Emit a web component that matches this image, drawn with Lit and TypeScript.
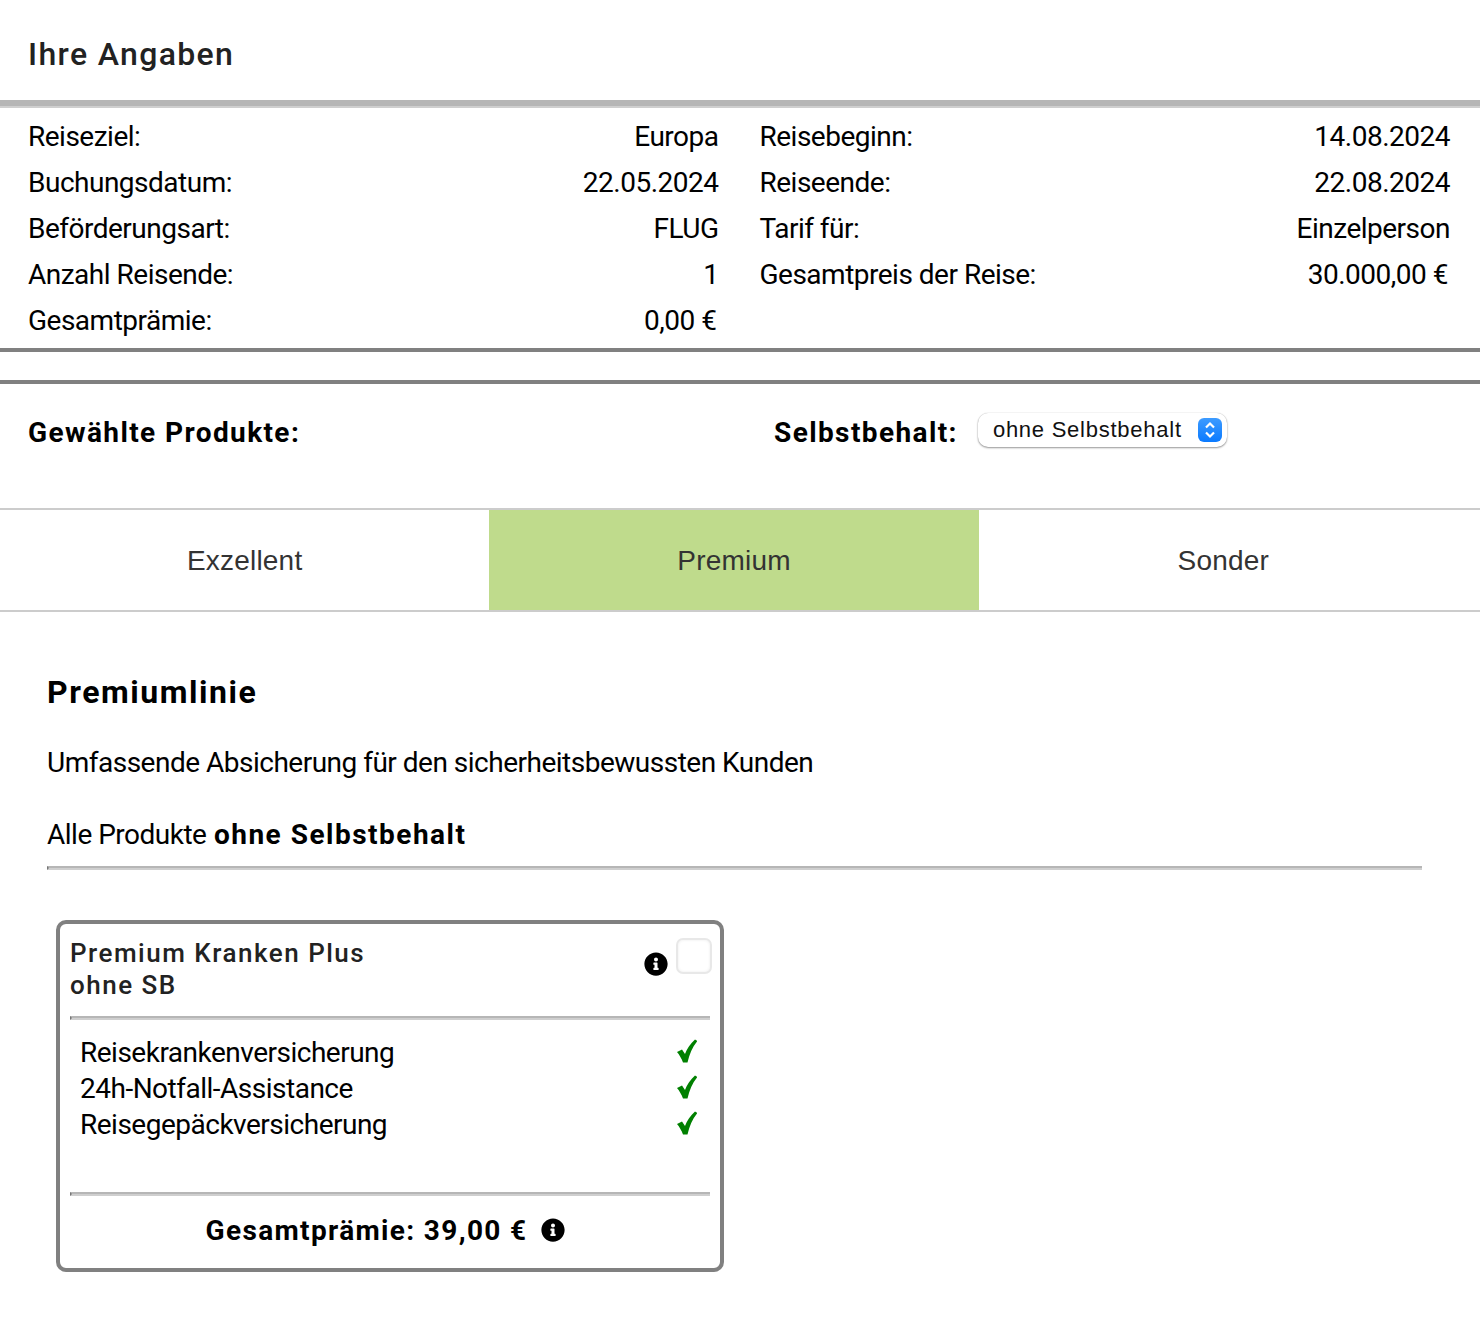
import { LitElement, html, css } from "lit";
import { customElement } from "lit/decorators.js";

const infoIcon = html`<svg class="info" viewBox="0 0 512 512"><path d="M256 8C119.043 8 8 119.083 8 256c0 136.997 111.043 248 248 248s248-111.003 248-248C504 119.083 392.957 8 256 8zm0 110c23.196 0 42 18.804 42 42s-18.804 42-42 42-42-18.804-42-42 18.804-42 42-42zm56 254c0 6.627-5.373 12-12 12h-88c-6.627 0-12-5.373-12-12v-24c0-6.627 5.373-12 12-12h12v-64h-12c-6.627 0-12-5.373-12-12v-24c0-6.627 5.373-12 12-12h64c6.627 0 12 5.373 12 12v100h12c6.627 0 12 5.373 12 12v24z"/></svg>`;
const check = html`<svg class="check" viewBox="0 0 20 24"><path fill="#008000" d="M0 13 L5 10.5 L8 15 C10 9.5 13.5 4.5 18 0.5 L20.5 2 C15.5 8 12.5 15 10.5 23.5 L6 23.5 C4.5 19.5 2.5 16 0 13 Z"/></svg>`;

const left = [["Reiseziel:", "Europa"], ["Buchungsdatum:", "22.05.2024"], ["Beförderungsart:", "FLUG"], ["Anzahl Reisende:", "1"], ["Gesamtprämie:", "0,00 €"]];
const right = [["Reisebeginn:", "14.08.2024"], ["Reiseende:", "22.08.2024"], ["Tarif für:", "Einzelperson"], ["Gesamtpreis der Reise:", "30.000,00 €"]];
const features = ["Reisekrankenversicherung", "24h-Notfall-Assistance", "Reisegepäckversicherung"];

@customElement("app-root")
export class AppRoot extends LitElement {
  static styles = css`
    :host { display: block; height: 1322px; background: #fff; color: #000; font-family: Roboto, sans-serif; font-size: 28px; letter-spacing: -0.5px; overflow: hidden; }
    .title { margin: 0; padding: 32px 28px 0; height: 68px; box-sizing: border-box; font-size: 32px; line-height: 44px; font-weight: 500; letter-spacing: 1.35px; color: #222; }
    .hr { box-sizing: border-box; height: 4px; border-top: 2px solid #b6b6b6; border-bottom: 2px solid #cfcfcf; border-left: 2px solid #777; }
    .rule-top { height: 8px; border-top-width: 6px; border-left: 0; margin-top: 32px; }
    .data { display: flex; padding: 6px 30px 0 28px; gap: 41px; height: 240px; box-sizing: border-box; }
    .col { flex: 1; }
    .row { display: flex; justify-content: space-between; height: 46px; line-height: 46px; white-space: nowrap; }
    .euro { padding-right: 2px; }
    .thick { height: 4px; background: #808080; }
    .gap { height: 28px; }
    .choose { height: 124px; display: flex; box-sizing: border-box; padding: 29px 0 0 28px; font-weight: 700; letter-spacing: 1.4px; line-height: 40px; }
    .choose-l { width: 746px; }
    .sel-wrap { display: flex; align-items: flex-start; gap: 20px; }
    .select { width: 249px; height: 34px; box-sizing: border-box; border-radius: 10px; background: #fff; box-shadow: 0 1px 2px rgba(0,0,0,.4), 0 0 1px rgba(0,0,0,.25); display: flex; align-items: center; justify-content: space-between; padding: 0 5px 0 15px; font: 400 22px/34px "Liberation Sans", sans-serif; letter-spacing: .75px; color: #111; }
    .updown { width: 24px; height: 24px; border-radius: 6px; background: linear-gradient(#3d9bff, #0a7aff); display: block; }
    .tabs { display: grid; grid-template-columns: repeat(3, 489.33px); height: 104px; box-sizing: border-box; border-top: 2px solid #ccc; border-bottom: 2px solid #ccc; font: 400 28px/100px "Liberation Sans", sans-serif; letter-spacing: .2px; color: #333; text-align: center; }
    .tab { height: 100px; }
    .tab span { position: relative; top: 1px; }
    .tab.active { background: #bfdb8c; }
    .panel { padding: 0 58px 0 47px; }
    h2 { margin: 0; padding-top: 57px; font-size: 32px; line-height: 46px; font-weight: 700; letter-spacing: 1.55px; }
    .desc { margin-top: 25px; line-height: 46px; }
    .alle { margin-top: 26px; line-height: 46px; }
    .alle b { letter-spacing: 1.5px; margin-left: 1px; }
    .panel > .hr { margin-top: 8px; }
    .card { margin: 50px 0 0 9px; width: 668px; height: 352px; box-sizing: border-box; border: 4px solid #808080; border-radius: 10px; padding: 10px 10px 0 10px; }
    .head { display: flex; height: 82px; }
    .name { flex: 1; font-size: 26px; line-height: 32px; font-weight: 500; letter-spacing: 1.5px; color: #222; padding-top: 3px; }
    .info { width: 24px; height: 24px; display: block; flex: none; }
    .head .info { margin: 18px 8px 0 0; }
    .box { width: 36px; height: 36px; box-sizing: border-box; border: 2px solid #e8e8e8; border-radius: 7px; box-shadow: inset 0 0 3px rgba(0,0,0,.08); margin: 4px -2px 0 0; }
    .features { padding: 15px 12px 0 10px; height: 172px; box-sizing: border-box; }
    .feat { display: flex; justify-content: space-between; align-items: center; height: 36px; line-height: 36px; }
    .check { width: 20px; height: 24px; display: block; margin: 0 1px 4px 0; }
    .total { display: flex; justify-content: center; align-items: center; gap: 13px; height: 68px; padding-right: 10px; font-weight: 700; letter-spacing: 1.35px; }
  `;

  render() {
    const rows = (r: string[][]) => r.map(([a, b]) => html`<div class="row"><span>${a}</span><span class=${b.endsWith("€") ? "euro" : ""}>${b}</span></div>`);
    return html`
      <h1 class="title">Ihre Angaben</h1>
      <div class="hr rule-top"></div>
      <div class="data"><div class="col">${rows(left)}</div><div class="col">${rows(right)}</div></div>
      <div class="thick"></div>
      <div class="gap"></div>
      <div class="thick"></div>
      <div class="choose">
        <div class="choose-l">Gewählte Produkte:</div>
        <div class="sel-wrap"><span>Selbstbehalt:</span>
          <div class="select"><span>ohne Selbstbehalt</span>
            <svg class="updown" viewBox="0 0 24 24"><path d="M8 9.5 L12 5.5 L16 9.5 M8 14.5 L12 18.5 L16 14.5" fill="none" stroke="#fff" stroke-width="2.2"/></svg>
          </div>
        </div>
      </div>
      <div class="tabs"><div class="tab"><span>Exzellent</span></div><div class="tab active"><span>Premium</span></div><div class="tab"><span>Sonder</span></div></div>
      <div class="panel">
        <h2>Premiumlinie</h2>
        <div class="desc">Umfassende Absicherung für den sicherheitsbewussten Kunden</div>
        <div class="alle">Alle Produkte <b>ohne Selbstbehalt</b></div>
        <div class="hr"></div>
        <div class="card">
          <div class="head"><div class="name">Premium Kranken Plus<br />ohne SB</div>${infoIcon}<div class="box"></div></div>
          <div class="hr"></div>
          <div class="features">${features.map((f) => html`<div class="feat"><span>${f}</span>${check}</div>`)}</div>
          <div class="hr"></div>
          <div class="total"><span>Gesamtprämie: 39,00 €</span>${infoIcon}</div>
        </div>
      </div>
    `;
  }
}
